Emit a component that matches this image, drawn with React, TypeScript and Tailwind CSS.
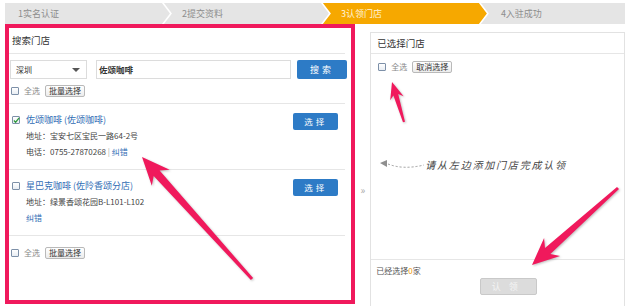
import React from 'react';

const font = "font-['Noto_Sans_CJK_SC','Noto_Sans',sans-serif]";

const steps = [
  { label: '1实名认证', w: 'w-[166px]', active: false, first: true, last: false },
  { label: '2提交资料', w: 'w-[166px]', active: false, first: false, last: false },
  { label: '3认领门店', w: 'w-[165px]', active: true, first: false, last: false },
  { label: '4入驻成功', w: 'w-[145px]', active: false, first: false, last: true },
];

const stores = [
  {
    name: '佐颂咖啡 (佐颂咖啡)',
    checked: true,
    lines: ['地址：宝安七区宝民一路64-2号'],
    phone: '0755-27870268',
  },
  {
    name: '星巴克咖啡 (佐阾香颂分店)',
    checked: false,
    lines: ['地址：绿景香颂花园B-L101-L102'],
    phone: '',
  },
];

function arrowPoints(tx: number, ty: number, ex: number, ey: number, head: number, headW: number, neck: number, tail: number) {
  const len = Math.hypot(tx - ex, ty - ey);
  const dx = (tx - ex) / len;
  const dy = (ty - ey) / len;
  const nx = -dy;
  const ny = dx;
  const bx = tx - dx * head;
  const by = ty - dy * head;
  const kx = tx - dx * head * 0.78;
  const ky = ty - dy * head * 0.78;
  const pts = [
    [tx, ty],
    [bx + nx * headW, by + ny * headW],
    [kx + nx * neck, ky + ny * neck],
    [ex + nx * tail, ey + ny * tail],
    [ex - nx * tail, ey - ny * tail],
    [kx - nx * neck, ky - ny * neck],
    [bx - nx * headW, by - ny * headW],
  ];
  return pts.map((p) => `${p[0].toFixed(1)},${p[1].toFixed(1)}`).join(' ');
}

function Check({ checked = false }: { checked?: boolean }) {
  return (
    <span className="relative inline-block w-[8px] h-[8px] shrink-0 border border-[#7d90a8] bg-gradient-to-b from-white to-[#e8edf3] rounded-[1px]">
      {checked && (
        <svg viewBox="0 0 8 8" className="absolute left-0 top-0 w-[7px] h-[7px]">
          <path d="M1 4 L3 6 L7 1" fill="none" stroke="#2e9a3a" strokeWidth="1.4" />
        </svg>
      )}
    </span>
  );
}

function SmallButton({ children }: { children: React.ReactNode }) {
  return (
    <span className="inline-flex items-center h-[12px] px-[3px] border border-[#b9b9b9] rounded-[2px] bg-gradient-to-b from-white to-[#ececec] text-[8px] leading-none text-[#333]">
      {children}
    </span>
  );
}

function Steps() {
  return (
    <div className="flex h-[21px] mt-[3px] ml-[5px]">
      {steps.map((s) => (
        <div
          key={s.label}
          className={`${s.w} h-full flex items-center text-[9px] ${
            s.active ? 'bg-[#f6a800] text-[#fff4dc]' : 'bg-[#e5e5e5] text-[#8d8d8d]'
          } ${s.first ? 'pl-[13px] [clip-path:polygon(0_0,calc(100%-8px)_0,100%_50%,calc(100%-8px)_100%,0_100%)]' : ''} ${
            s.last ? 'pl-[20px] -ml-[6px] [clip-path:polygon(0_0,100%_0,100%_100%,0_100%,8px_50%)]' : ''
          } ${
            !s.first && !s.last
              ? 'pl-[18px] -ml-[6px] [clip-path:polygon(0_0,calc(100%-8px)_0,100%_50%,calc(100%-8px)_100%,0_100%,8px_50%)]'
              : ''
          }`}
        >
          {s.label}
        </div>
      ))}
    </div>
  );
}

function StoreItem({ store }: { store: (typeof stores)[number] }) {
  return (
    <div className="flex justify-between border-b border-[#e6e6e6] mr-[6px] h-[66px]">
      <div className="flex pt-[8px] pl-[3px]">
        <div className="h-[16px] flex items-center mr-[6px]">
          <Check checked={store.checked} />
        </div>
        <div className="flex flex-col">
          <span className="leading-[16px] text-[9px] text-[#2f6cb4]">{store.name}</span>
          {store.lines.map((l) => (
            <span key={l} className="leading-[16px] text-[8px] text-[#444]">
              {l}
            </span>
          ))}
          {store.phone ? (
            <span className="leading-[16px] text-[8px] text-[#444]">
              电话：{store.phone} <span className="text-[#aaa]">|</span>{' '}
              <span className="text-[#2f6cb4]">纠错</span>
            </span>
          ) : (
            <span className="leading-[16px] text-[8px] text-[#2f6cb4]">纠错</span>
          )}
        </div>
      </div>
      <div className="mt-[9px] mr-[7px] w-[45px] h-[17px] rounded-[2px] bg-[#2d7bc6] text-white text-[8.5px] flex items-center justify-center tracking-[3px]">
        选择
      </div>
    </div>
  );
}

export default function App() {
  return (
    <div className={`relative w-[625px] h-[306px] overflow-hidden bg-white ${font}`}>
      <Steps />
      <div className="flex ml-[5px]">
        {/* left: search */}
        <div className="w-[352px] h-[280px] border-[4px] border-[#f0195c] bg-white flex flex-col">
          <div className="h-[26px] border-b border-[#e6e6e6] mr-[6px] flex items-center pl-[3px] text-[9.5px] text-[#333]">
            搜索门店
          </div>
          <div className="flex h-[19px] mt-[6px] pl-[1px]">
            <div className="w-[77px] h-full border border-[#dcdcdc] flex items-center justify-between pl-[5px] pr-[6px] text-[8px] text-[#333]">
              <span>深圳</span>
              <span className="w-0 h-0 border-l-[4px] border-r-[4px] border-t-[4px] border-l-transparent border-r-transparent border-t-[#555]" />
            </div>
            <div className="ml-[9px] w-[195px] h-full border border-[#dcdcdc] flex items-center pl-[2px] text-[8.5px] font-bold text-[#333]">
              佐颂咖啡
            </div>
            <div className="ml-[6px] w-[50px] h-full rounded-[2px] bg-[#2d7bc6] text-white text-[9px] flex items-center justify-center tracking-[3px]">
              搜索
            </div>
          </div>
          <div className="flex items-center gap-[5px] h-[13px] mt-[5px] pl-[2px]">
            <Check />
            <span className="text-[8px] text-[#888]">全选</span>
            <SmallButton>批量选择</SmallButton>
          </div>
          <div className="mt-[6px] border-t border-[#e6e6e6] mr-[6px]" />
          {stores.map((s) => (
            <StoreItem key={s.name} store={s} />
          ))}
          <div className="flex items-center gap-[5px] h-[13px] mt-[10px] pl-[2px]">
            <Check />
            <span className="text-[8px] text-[#888]">全选</span>
            <SmallButton>批量选择</SmallButton>
          </div>
        </div>

        {/* middle arrow */}
        <div className="w-[15px] flex justify-center pt-[161px] text-[10px] leading-none text-[#aaa]">»</div>

        {/* right: selected */}
        <div className="mt-[8px] w-[256px] h-[280px] border border-[#e2e2e2] flex flex-col">
          <div className="h-[21px] border-b border-[#e6e6e6] flex items-center pl-[6px] text-[9.5px] text-[#333]">
            已选择门店
          </div>
          <div className="flex items-center gap-[5px] h-[13px] mt-[6px] pl-[7px]">
            <Check />
            <span className="text-[8px] text-[#888]">全选</span>
            <SmallButton>取消选择</SmallButton>
          </div>
          <div className="flex items-center h-[14px] mt-[84px] pl-[8px]">
            <svg width="46" height="14" viewBox="0 0 46 14" className="shrink-0">
              <path d="M9 7 Q 24 13 45 8" fill="none" stroke="#999" strokeWidth="1" strokeDasharray="2 2" />
              <polygon points="1,6 8,3 8,10" fill="#8f8f8f" />
            </svg>
            <span className="text-[10px] italic tracking-[1.8px] text-[#444]">请从左边添加门店完成认领</span>
          </div>
          <div className="mt-[88px] border-t border-[#e6e6e6] flex flex-col">
            <span className="mt-[5px] pl-[5px] leading-[12px] text-[8px] text-[#555]">
              已经选择<span className="text-[#f39800]">0</span>家
            </span>
            <div className="mt-[1px] ml-[109px] w-[57px] h-[17px] rounded-[2px] border border-[#c9c9c9] bg-[#dcdcdc] text-[#f4f4f4] text-[9px] flex items-center justify-center tracking-[8px]">
              认领
            </div>
          </div>
        </div>
      </div>

      {/* annotation arrows */}
      <svg
        className="absolute left-0 top-0 pointer-events-none drop-shadow-[1px_1px_1px_rgba(0,0,0,0.25)]"
        width="625"
        height="306"
        viewBox="0 0 625 306"
      >
        <polygon points={arrowPoints(142, 157, 252, 279, 28, 12, 4, 1.5)} fill="#f0195c" />
        <polygon points={arrowPoints(392, 82, 404, 122, 17, 7, 2.5, 1)} fill="#f0195c" />
        <polygon points={arrowPoints(532, 265, 618, 188, 27, 12, 4, 1.5)} fill="#f0195c" />
      </svg>
    </div>
  );
}
